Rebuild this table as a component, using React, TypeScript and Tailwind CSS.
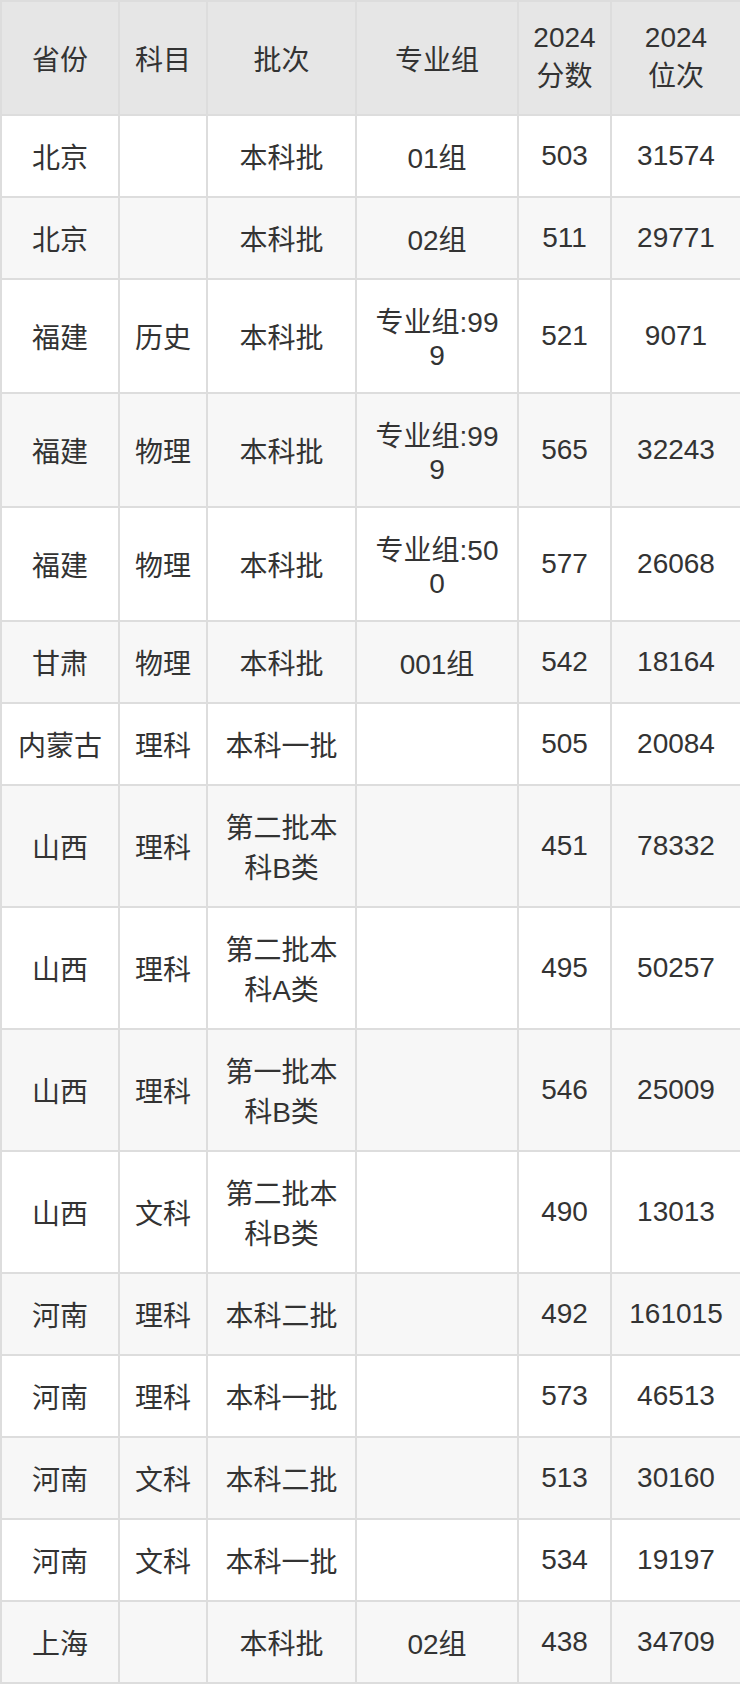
const rows: string[][] = [
  ['北京', '', '本科批', '01组', '503', '31574'],
  ['北京', '', '本科批', '02组', '511', '29771'],
  ['福建', '历史', '本科批', '专业组:999', '521', '9071'],
  ['福建', '物理', '本科批', '专业组:999', '565', '32243'],
  ['福建', '物理', '本科批', '专业组:500', '577', '26068'],
  ['甘肃', '物理', '本科批', '001组', '542', '18164'],
  ['内蒙古', '理科', '本科一批', '', '505', '20084'],
  ['山西', '理科', '第二批本科B类', '', '451', '78332'],
  ['山西', '理科', '第二批本科A类', '', '495', '50257'],
  ['山西', '理科', '第一批本科B类', '', '546', '25009'],
  ['山西', '文科', '第二批本科B类', '', '490', '13013'],
  ['河南', '理科', '本科二批', '', '492', '161015'],
  ['河南', '理科', '本科一批', '', '573', '46513'],
  ['河南', '文科', '本科二批', '', '513', '30160'],
  ['河南', '文科', '本科一批', '', '534', '19197'],
  ['上海', '', '本科批', '02组', '438', '34709'],
];

// header cells: [first part, second part] — parts wrap as whole words
const headers: string[][] = [['省份'], ['科目'], ['批次'], ['专业组'], ['2024', '分数'], ['2024', '位次']];

export default function App() {
  return (
    <div className="w-[740px] bg-white font-['Liberation_Sans','Noto_Sans_CJK_SC',sans-serif] text-[28px] leading-[normal] text-[#333333]">
      <table className="w-[740px] table-fixed border-collapse border-2 border-[#dddddd]">
        <colgroup>
          <col className="w-[118px]" />
          <col className="w-[88px]" />
          <col className="w-[149px]" />
          <col className="w-[162px]" />
          <col className="w-[93px]" />
          <col className="w-[130px]" />
        </colgroup>
        <thead>
          <tr className="bg-[#e6e6e6]">
            {headers.map((h, i) => (
              <th key={i} className="border-2 border-[#dddddd] px-[14px] py-[20px] text-center align-middle font-normal">
                {h.map((part) => (
                  <span key={part} className="inline-block">
                    {part}
                  </span>
                ))}
              </th>
            ))}
          </tr>
        </thead>
        <tbody>
          {rows.map((r, i) => (
            <tr key={i} className={i % 2 === 0 ? 'bg-white' : 'bg-[#f7f7f7]'}>
              {r.map((c, j) => (
                <td key={j} className="border-2 border-[#dddddd] px-[14px] py-[20px] text-center align-middle break-all">
                  {c}
                </td>
              ))}
            </tr>
          ))}
        </tbody>
      </table>
    </div>
  );
}
